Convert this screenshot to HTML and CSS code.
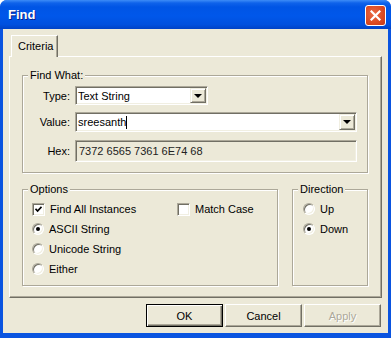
FILE: index.html
```html
<!DOCTYPE html>
<html lang="en">
<head>
    <meta charset="UTF-8">
    <title>Find</title>
    <link rel="stylesheet" href="styles.css">
</head>
<body>
    <div class="window">
        <div class="titlebar">
            <span class="title">Find</span>
            <span class="close">
                <svg width="11" height="11" viewBox="0 0 11 11">
                    <path d="M1.5 1.5 L9.5 9.5 M9.5 1.5 L1.5 9.5" stroke="#fff" stroke-width="2.2" stroke-linecap="square"/>
                </svg>
            </span>
        </div>

        <div class="client">
            <div class="tabs">
                <div class="tab">Criteria</div>
            </div>

            <div class="panel">
                <fieldset class="group find-what">
                    <legend>Find What:</legend>
                    <div class="row">
                        <label class="lbl">Type:</label>
                        <div class="combo combo-type">
                            <span class="combo-text">Text String</span>
                            <span class="drop"><i class="arrow"></i></span>
                        </div>
                    </div>
                    <div class="row row-value">
                        <label class="lbl">Value:</label>
                        <div class="combo combo-value">
                            <span class="combo-text">sreesanth<span class="caret"></span></span>
                            <span class="drop"><i class="arrow"></i></span>
                        </div>
                    </div>
                    <div class="row row-hex">
                        <label class="lbl">Hex:</label>
                        <div class="hex">7372 6565 7361 6E74 68</div>
                    </div>
                </fieldset>

                <div class="lower">
                    <fieldset class="group options">
                        <legend>Options</legend>
                        <div class="opt-grid">
                            <div class="opt">
                                <span class="check">
                                    <svg width="7" height="7" viewBox="0 0 7 7">
                                        <path d="M0.5 2.8 L2.6 5 L6.5 0.8" stroke="#000" stroke-width="1.7" fill="none"/>
                                    </svg>
                                </span>
                                Find All Instances
                            </div>
                            <div class="opt"><span class="check"></span>Match Case</div>
                            <div class="opt col1"><span class="radio on"></span>ASCII String</div>
                            <div class="opt col1"><span class="radio"></span>Unicode String</div>
                            <div class="opt col1"><span class="radio"></span>Either</div>
                        </div>
                    </fieldset>

                    <fieldset class="group direction">
                        <legend>Direction</legend>
                        <div class="dir-list">
                            <div class="opt"><span class="radio"></span>Up</div>
                            <div class="opt"><span class="radio on"></span>Down</div>
                        </div>
                    </fieldset>
                </div>
            </div>

            <div class="buttons">
                <button class="btn default">OK</button>
                <button class="btn">Cancel</button>
                <button class="btn disabled">Apply</button>
            </div>
        </div>
    </div>
</body>
</html>
```

FILE: styles.css
```css
body {
    margin: 0;
    background: #fff;
    font-family: "Liberation Sans", Arial, sans-serif;
    font-size: 11px;
    color: #000;
}
.window {
    width: 391px;
    height: 338px;
    display: flex;
    flex-direction: column;
    background: #0a54e0;
    border-radius: 7px 7px 0 0;
    overflow: hidden;
}
.titlebar {
    height: 29px;
    flex: none;
    display: flex;
    align-items: center;
    justify-content: space-between;
    padding: 0 5px 0 8px;
    background: linear-gradient(#3d8cf7 0, #0f63ea 3px, #0055e5 7px, #0057ea 55%, #0050de 85%, #0042c6 100%);
}
.title {
    color: #fff;
    font-weight: bold;
    font-size: 13px;
    text-shadow: 1px 1px #0a1f8a;
}
.close {
    width: 21px;
    height: 21px;
    margin-top: 2px;
    box-sizing: border-box;
    border: 1px solid #fff;
    border-radius: 3px;
    background: radial-gradient(circle at 40% 40%, #ea6a45, #d9471f 65%, #c23a18);
    display: flex;
    align-items: center;
    justify-content: center;
}
.client {
    flex: 1;
    margin: 0 3px 5px;
    padding: 6px 6px 0;
    background: #ece9d8;
    display: flex;
    flex-direction: column;
}
.tabs {
    display: flex;
    padding-left: 2px;
    position: relative;
    z-index: 1;
}
.tab {
    height: 22px;
    box-sizing: border-box;
    padding: 0 4px 0 6px;
    border: 1px solid;
    border-color: #fff #716f64 transparent #fff;
    border-bottom: none;
    box-shadow: inset -1px 0 #aca899;
    background: #ece9d8;
    line-height: 21px;
}
.panel {
    height: 242px;
    margin-top: -1px;
    box-sizing: border-box;
    border: 1px solid;
    border-color: #fff #716f64 #716f64 #fff;
    box-shadow: inset -1px -1px #aca899;
    padding: 12px 13px 11px 12px;
    display: flex;
    flex-direction: column;
}
.group {
    margin: 0;
    padding: 0;
    min-width: 0;
    border: 1px solid #aca899;
    box-shadow: inset 1px 1px #fff, 1px 1px #fff;
}
.group legend {
    margin-left: 5px;
    padding: 0 2px;
    line-height: 13px;
    background: #ece9d8;
}
.find-what {
    padding-bottom: 10px;
}
.row {
    display: flex;
    align-items: center;
    margin-right: 10px;
}
.row:first-of-type {
    margin-top: 4px;
}
.row-value {
    margin-top: 7px;
}
.row-hex {
    margin-top: 8px;
}
.lbl {
    width: 47px;
    flex: none;
    margin-right: 5px;
    text-align: right;
}
.combo, .hex {
    box-sizing: border-box;
    border: 1px solid;
    border-color: #aca899 #fff #fff #aca899;
    box-shadow: inset 1px 1px #716f64, inset -1px -1px #f1efe2;
}
.combo {
    display: flex;
    align-items: stretch;
    padding: 1px;
    background: #fff;
}
.combo-type {
    width: 133px;
    height: 19px;
}
.combo-value {
    flex: 1;
    height: 20px;
}
.combo-text {
    flex: 1;
    padding-left: 1px;
    display: flex;
    align-items: center;
    white-space: nowrap;
}
.caret {
    width: 0;
    height: 13px;
    border-left: 1px solid #000;
}
.drop {
    width: 16px;
    box-sizing: border-box;
    border: 1px solid;
    border-color: #f1efe2 #716f64 #716f64 #f1efe2;
    box-shadow: inset 1px 1px #fff, inset -1px -1px #aca899;
    background: #ece9d8;
    display: flex;
    align-items: center;
    justify-content: center;
}
.arrow {
    width: 0;
    height: 0;
    border-left: 4px solid transparent;
    border-right: 4px solid transparent;
    border-top: 4px solid #000;
}
.hex {
    flex: 1;
    height: 22px;
    padding-left: 3px;
    display: flex;
    align-items: center;
    background: #ece9d8;
    color: #222;
}
.lower {
    flex: 1;
    display: flex;
    margin-top: 10px;
}
.options {
    width: 256px;
    flex: none;
    box-sizing: border-box;
}
.direction {
    flex: 1;
    margin-left: 14px;
}
.opt-grid {
    display: grid;
    grid-template-columns: 145px auto;
    grid-auto-rows: 20px;
    padding: 3px 0 0 9px;
}
.dir-list {
    padding: 3px 0 0 10px;
}
.col1 {
    grid-column: 1;
}
.opt {
    height: 20px;
    display: flex;
    align-items: center;
    gap: 5px;
    white-space: nowrap;
}
.check, .radio {
    flex: none;
    box-sizing: border-box;
    border: 1px solid;
    border-color: #aca899 #fff #fff #aca899;
    box-shadow: inset 1px 1px #716f64, inset -1px -1px #f1efe2;
    background: #fff;
    display: flex;
    align-items: center;
    justify-content: center;
}
.check {
    width: 13px;
    height: 13px;
}
.radio {
    width: 12px;
    height: 12px;
    border-radius: 50%;
}
.radio.on::after {
    content: "";
    width: 4px;
    height: 4px;
    border-radius: 50%;
    background: #000;
}
.buttons {
    display: flex;
    justify-content: flex-end;
    gap: 2px;
    margin-top: 6px;
    padding-right: 1px;
}
.btn {
    width: 77px;
    height: 23px;
    box-sizing: border-box;
    font-family: inherit;
    font-size: 11px;
    color: #000;
    background: #ece9d8;
    border: 1px solid;
    border-color: #fff #716f64 #716f64 #fff;
    box-shadow: inset -1px -1px #aca899;
    padding: 0;
}
.btn.default {
    border-color: #000;
    box-shadow: inset 1px 1px #fff, inset -1px -1px #716f64, inset -2px -2px #aca899;
}
.btn.disabled {
    color: #aca899;
    text-shadow: 1px 1px #fff;
}
```
